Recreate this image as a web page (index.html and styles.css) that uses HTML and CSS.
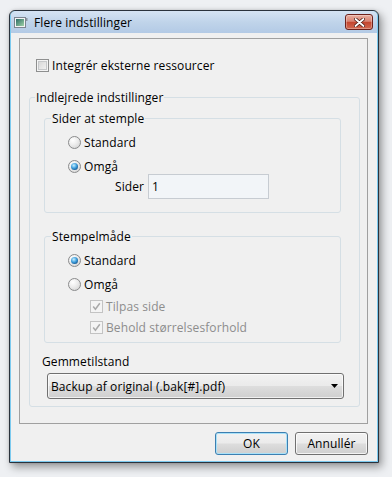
FILE: index.html
```html
<!DOCTYPE html>
<html lang="da">
<head>
<meta charset="utf-8">
<title>Flere indstillinger</title>
<link rel="stylesheet" href="styles.css">
</head>
<body>
<div class="window">
  <div class="titlebar">
    <svg class="appicon" width="14" height="11" viewBox="0 0 14 11">
      <defs>
        <linearGradient id="appg" x1="0" y1="0" x2="1" y2="1">
          <stop offset="0" stop-color="#2c6a64"/>
          <stop offset="1" stop-color="#9fd3a8"/>
        </linearGradient>
      </defs>
      <rect x="0.5" y="0.5" width="11" height="10" fill="#f4f4f4" stroke="#7d8590"/>
      <rect x="2" y="2" width="8" height="7" fill="url(#appg)"/>
      <rect x="12" y="1" width="1.5" height="3" fill="#8c96a0"/>
    </svg>
    <span class="title">Flere indstillinger</span>
    <div class="close">
      <svg width="11" height="9" viewBox="0 0 11 9">
        <path d="M1.5 1 L9.5 8 M9.5 1 L1.5 8" stroke="#4b1a14" stroke-width="3.4" stroke-linecap="round" fill="none"/>
        <path d="M1.5 1 L9.5 8 M9.5 1 L1.5 8" stroke="#ffffff" stroke-width="1.8" stroke-linecap="round" fill="none"/>
      </svg>
    </div>
  </div>
  <div class="body">
    <div class="panel">
      <div class="row top-check">
        <span class="cb"></span>
        <span class="txt">Integrér eksterne ressourcer</span>
      </div>
      <fieldset class="group outer">
        <legend>Indlejrede indstillinger</legend>
        <fieldset class="group inner g1">
          <legend>Sider at stemple</legend>
          <div class="row radio-row first"><span class="radio"></span><span class="txt">Standard</span></div>
          <div class="row radio-row"><span class="radio on"></span><span class="txt">Omgå</span></div>
          <div class="row sider-row"><span class="txt sider-label">Sider</span><div class="input">1</div></div>
        </fieldset>
        <fieldset class="group inner g2">
          <legend>Stempelmåde</legend>
          <div class="row radio-row first"><span class="radio on"></span><span class="txt">Standard</span></div>
          <div class="row radio-row"><span class="radio"></span><span class="txt">Omgå</span></div>
          <div class="row sub-check">
            <span class="cb disabled">
              <svg width="11" height="11" viewBox="0 0 11 11"><path d="M2.2 5.6 L4.4 8.2 L8.8 2.2" stroke="#a9a9a9" stroke-width="1.5" fill="none"/></svg>
            </span>
            <span class="txt dim">Tilpas side</span>
          </div>
          <div class="row sub-check">
            <span class="cb disabled">
              <svg width="11" height="11" viewBox="0 0 11 11"><path d="M2.2 5.6 L4.4 8.2 L8.8 2.2" stroke="#a9a9a9" stroke-width="1.5" fill="none"/></svg>
            </span>
            <span class="txt dim">Behold størrelsesforhold</span>
          </div>
        </fieldset>
        <div class="row save-label"><span class="txt">Gemmetilstand</span></div>
        <div class="select">
          <span class="txt">Backup af original (.bak[#].pdf)</span>
          <svg class="arrow" width="7" height="4" viewBox="0 0 7 4"><path d="M0 0 H7 L3.5 4 Z" fill="#000"/></svg>
        </div>
      </fieldset>
    </div>
    <div class="buttons">
      <div class="btn default">OK</div>
      <div class="btn">Annullér</div>
    </div>
  </div>
</div>
</body>
</html>
```
FILE: styles.css
```css
* { box-sizing: border-box; }
html, body { margin: 0; padding: 0; }
body {
  background: #eef0f3;
  font-family: "Open Sans", "Noto Sans", sans-serif;
  font-size: 12px;
  letter-spacing: 0.1px;
  color: #000;
  width: 392px;
  height: 477px;
  overflow: hidden;
}
.window {
  margin: 10px 0 0 9px;
  width: 370px;
  height: 453px;
  border: 1px solid #2a323c;
  border-radius: 6px 6px 0 0;
  background: #f0f0f0;
  box-shadow: inset 0 0 0 1px #7ccaef, 3px 4px 8px rgba(0,0,0,0.38), 0 0 3px rgba(0,0,0,0.15);
  display: flex;
  flex-direction: column;
}
.titlebar {
  height: 22px;
  margin: 0 1px;
  border-radius: 5px 5px 0 0;
  background: linear-gradient(#d5e3f3, #c0d4ea 50%, #b3cae5);
  display: flex;
  align-items: center;
  padding-left: 3px;
}
.appicon { display: block; flex: none; }
.title { margin-left: 6px; line-height: 15px; }
.close {
  margin: 3px 4px 0 auto;
  align-self: flex-start;
  width: 28px;
  height: 16px;
  border: 1px solid #6e211b;
  border-radius: 3px;
  background: linear-gradient(#eab0a2, #d98372 45%, #c4462f 52%, #d26a52);
  box-shadow: inset 0 0 0 1px rgba(255,255,255,0.3);
  display: flex;
  align-items: center;
  justify-content: center;
}
.close svg { display: block; }
.body {
  flex: 1;
  display: flex;
  flex-direction: column;
}
.panel {
  margin: 5px 10px 0 9px;
  height: 386px;
  border: 1px solid #a0a0a0;
  padding: 18px 7px 15px 0;
}
.row {
  display: flex;
  align-items: center;
  height: 16px;
  line-height: 15px;
  white-space: nowrap;
}
.txt { display: block; }
.top-check { padding-left: 16px; }
.top-check .txt, .radio-row .txt, .sub-check .txt { margin-left: 3px; }
.cb {
  flex: none;
  width: 13px;
  height: 13px;
  border: 1px solid #8e8f8f;
  background: linear-gradient(135deg, #d2d2d2, #f7f7f7);
  box-shadow: inset 0 0 0 1px #f4f4f4, inset 0 0 0 2px #c6c8ca;
}
.cb.disabled {
  border-color: #c3c3c3;
  background: #f4f4f4;
  box-shadow: none;
}
.cb svg { display: block; }
.group {
  margin: 0;
  padding: 0;
  min-width: 0;
  border: 1px solid #d5dfe5;
  border-radius: 3px;
}
.group legend {
  padding: 0 1px;
  line-height: 15px;
  height: 15px;
}
.outer {
  margin: 17px 0 0 9px;
  padding-bottom: 7px;
}
.outer > legend { margin-left: 5px; }
.inner {
  margin-left: 14px;
  margin-right: 18px;
  padding-bottom: 8px;
}
.inner > legend { margin-left: 6px; }
.g1 { margin-top: 6px; padding-bottom: 13px; }
.g2 { margin-top: 16px; padding-bottom: 8px; }
.radio-row { padding-left: 23px; margin-top: 8px; }
.radio-row.first { margin-top: 8px; }
.radio {
  flex: none;
  width: 13px;
  height: 13px;
  border-radius: 50%;
  border: 1px solid #8a8b8c;
  background: radial-gradient(circle at 35% 30%, #ffffff, #ececec 45%, #cdcdcd 100%);
  display: flex;
  align-items: center;
  justify-content: center;
}
.radio.on::after {
  content: "";
  width: 7px;
  height: 7px;
  border-radius: 50%;
  background: radial-gradient(circle at 40% 35%, #c8f0ff, #3c9ddc 45%, #15548c 80%, #0d3a63);
}
.sider-row { height: 25px; padding-left: 70px; }
.sider-label { margin-right: 4px; }
.input {
  width: 121px;
  height: 25px;
  border: 1px solid #c7ccd2;
  background: #f2f5f8;
  padding: 4px 0 0 3px;
  line-height: 15px;
}
.sub-check { height: 14px; padding-left: 45px; margin-top: 7px; }
.dim { color: #8d8d8d; }
.save-label { padding-left: 12px; margin-top: 10px; }
.select {
  margin: 4px 0 0 17px;
  width: 297px;
  height: 26px;
  border: 1px solid #707070;
  border-radius: 3px;
  background: linear-gradient(#f2f2f2, #ebebeb 48%, #dddddd 52%, #cfcfcf);
  box-shadow: inset 0 0 0 1px rgba(255,255,255,0.7);
  display: flex;
  align-items: center;
  padding: 0 5px 0 3px;
  line-height: 15px;
  white-space: nowrap;
}
.select .arrow { margin-left: auto; display: block; }
.buttons {
  margin-top: 8px;
  padding-right: 10px;
  display: flex;
  justify-content: flex-end;
  gap: 7px;
}
.btn {
  width: 73px;
  height: 23px;
  border: 1px solid #707070;
  border-radius: 3px;
  background: linear-gradient(#f2f2f2, #ebebeb 48%, #dddddd 52%, #cfcfcf);
  box-shadow: inset 0 0 0 1px rgba(255,255,255,0.75);
  display: flex;
  align-items: center;
  justify-content: center;
  line-height: 15px;
}
.btn.default {
  border-color: #3c7fb1;
  box-shadow: inset 0 0 0 1px #a9e1f8;
}
```
